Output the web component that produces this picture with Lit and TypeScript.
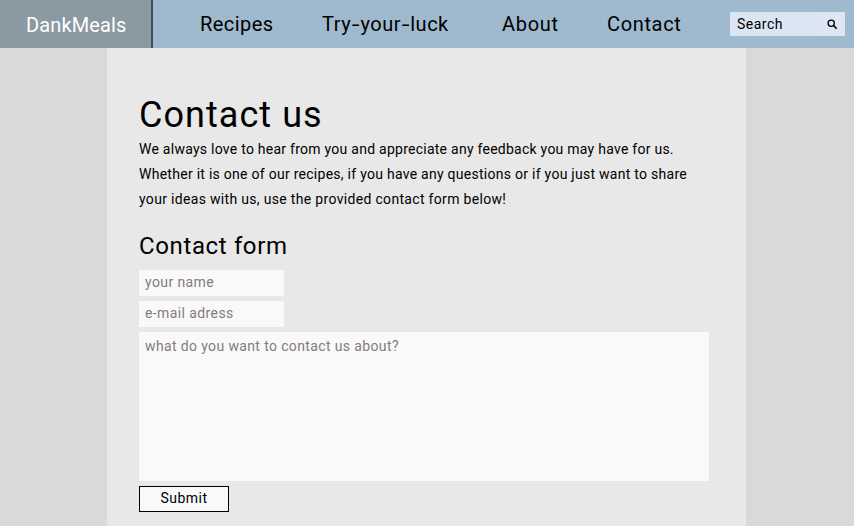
import { LitElement, html, css } from "lit";
import { customElement } from "lit/decorators.js";

@customElement("app-root")
export class AppRoot extends LitElement {
  static styles = css`
    :host { display: block; width: 100%; height: 526px; overflow: hidden; background: #d9d9d9; color: #000;
      font: 14px/25px Roboto, sans-serif; }
    * { box-sizing: border-box; }
    header { height: 48px; display: flex; background: #9fb9cf; }
    .logo { width: 153px; flex: none; background: #8b99a2; border-right: 2px solid #444d55; color: #fff;
      font-size: 20px; line-height: 51px; height: 48px; padding-left: 26px; letter-spacing: .12px; }
    nav { display: flex; padding-left: 47px; width: 577px; font-size: 20px; line-height: 48px; white-space: nowrap; }
    nav span { flex: none; }
    .recipes { width: 122px; letter-spacing: .45px; }
    .luck { width: 180px; letter-spacing: .5px; }
    .luck i { display: inline-block; width: 9.3px; text-align: center; font-style: normal; letter-spacing: 0; transform: scaleX(1.4); }
    .about { width: 105px; letter-spacing: .7px; }
    .contact { letter-spacing: .65px; }
    .search { width: 115px; height: 24px; margin-top: 12px; background: #dce6f3; display: flex; line-height: 25px; padding-left: 7px; letter-spacing: .5px; }
    .search span { width: 83px; }
    .go { width: 25px; height: 24px; background: #dfe5f2; }
    main { width: 639px; height: 478px; margin-left: 107px; padding: 45px 32px 0; background: #e8e8e8; }
    h1, h2, p { margin: 0; font-weight: 400; white-space: nowrap; }
    h1 { font-size: 36px; line-height: 45px; height: 44px; letter-spacing: 1.05px; }
    p span { display: block; }
    .line1 { letter-spacing: .255px; }
    .line2 { letter-spacing: .27px; }
    .line3 { letter-spacing: .32px; }
    h2 { font-size: 24px; line-height: 30px; margin-top: 19px; letter-spacing: .63px; }
    form { display: flex; flex-direction: column; gap: 5px; margin-top: 9px; }
    .field { width: 145px; height: 26px; padding-left: 6px; background: #f9f9f9; color: #857b7d; line-height: 24px; letter-spacing: .4px; }
    .area { width: 570px; height: 149px; padding-top: 2px; letter-spacing: .37px; }
    button { width: 90px; height: 26px; padding: 0 0 2px; border: 1px solid #000; background: #f9f9f9; color: #000; font: 14px/22px Roboto, sans-serif; letter-spacing: .48px; }
  `;
  render() {
    return html`
      <header>
        <div class="logo">DankMeals</div>
        <nav><span class="recipes">Recipes</span><span class="luck">Try<i>-</i>your<i>-</i>luck</span><span class="about">About</span><span class="contact">Contact</span></nav>
        <div class="search"><span>Search</span>
          <svg class="go" viewBox="0 0 25 24" fill="none" stroke="#000"><circle cx="11.2" cy="11.2" r="3.1" stroke-width="1.3"/><path d="M13.5 13.5 16.7 16.7" stroke-width="1.6"/></svg>
        </div>
      </header>
      <main>
        <h1>Contact us</h1>
        <p><span class="line1">We always love to hear from you and appreciate any feedback you may have for us.</span>
        <span class="line2">Whether it is one of our recipes, if you have any questions or if you just want to share</span>
        <span class="line3">your ideas with us, use the provided contact form below!</span></p>
        <h2>Contact form</h2>
        <form>
          <div class="field name">your name</div>
          <div class="field mail">e-mail adress</div>
          <div class="field area">what do you want to contact us about?</div>
          <button type="button">Submit</button>
        </form>
      </main>`;
  }
}
